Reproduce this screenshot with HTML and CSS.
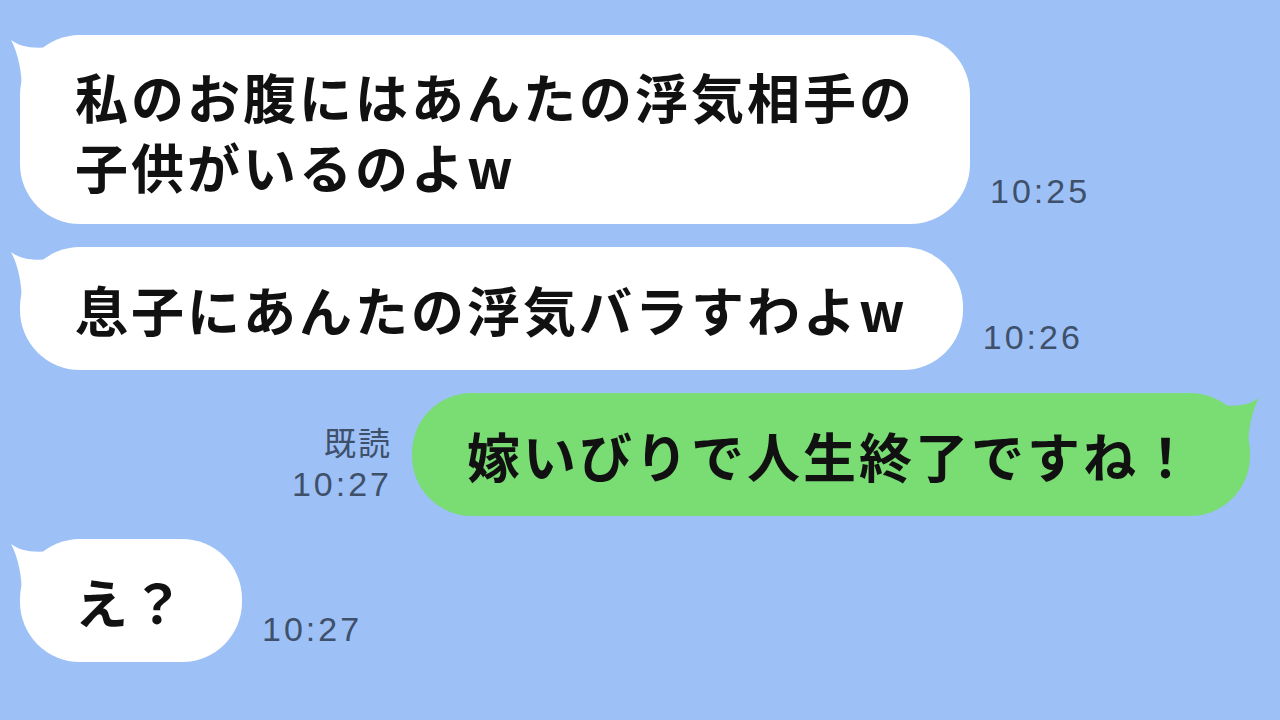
FILE: index.html
```html
<!DOCTYPE html>
<html lang="ja">
<head>
<meta charset="utf-8">
<link rel="stylesheet" href="styles.css">
</head>
<body>
<main class="chat">
  <div class="row row-left">
    <div class="bubble bubble-white bubble-multi">
      <svg class="tail tail-left" viewBox="0 0 60 60" aria-hidden="true"><path d="M3 5 C 14 13, 28 15, 58 10 L 58 58 L 14 58 C 14 36, 10 18, 3 5 Z"/></svg>
      <p class="text">私のお腹にはあんたの浮気相手の<br>子供がいるのよw</p>
    </div>
    <div class="meta"><span class="time">10:25</span></div>
  </div>

  <div class="row row-left">
    <div class="bubble bubble-white">
      <svg class="tail tail-left" viewBox="0 0 60 60" aria-hidden="true"><path d="M3 5 C 14 13, 28 15, 58 10 L 58 58 L 14 58 C 14 36, 10 18, 3 5 Z"/></svg>
      <p class="text">息子にあんたの浮気バラすわよw</p>
    </div>
    <div class="meta"><span class="time">10:26</span></div>
  </div>

  <div class="row row-right">
    <div class="meta meta-right"><span class="read">既読</span><span class="time">10:27</span></div>
    <div class="bubble bubble-green">
      <svg class="tail tail-right" viewBox="0 0 60 60" aria-hidden="true"><path d="M57 5 C 46 13, 32 15, 2 10 L 2 58 L 46 58 C 46 36, 50 18, 57 5 Z"/></svg>
      <p class="text">嫁いびりで人生終了ですね！</p>
    </div>
  </div>

  <div class="row row-left">
    <div class="bubble bubble-white">
      <svg class="tail tail-left" viewBox="0 0 60 60" aria-hidden="true"><path d="M3 5 C 14 13, 28 15, 58 10 L 58 58 L 14 58 C 14 36, 10 18, 3 5 Z"/></svg>
      <p class="text">え？</p>
    </div>
    <div class="meta"><span class="time">10:27</span></div>
  </div>
</main>
</body>
</html>
```

FILE: styles.css
```css
html, body {
  margin: 0;
  padding: 0;
}

body {
  width: 1280px;
  height: 720px;
  overflow: hidden;
  background: #9dc0f6;
  font-family: "Noto Sans CJK JP", "Noto Sans", sans-serif;
}

.chat {
  display: flex;
  flex-direction: column;
  gap: 23px;
  padding: 35px 30px 0 20px;
}

.row {
  display: flex;
  align-items: flex-end;
  gap: 20px;
}

.row-right {
  justify-content: flex-end;
}

.bubble {
  position: relative;
  border-radius: 60px;
  padding: 27px 55px 26px;
}

.bubble-multi {
  padding: 26px 55px 23px;
}

.bubble-white {
  background: #ffffff;
}

.bubble-white .tail path {
  fill: #ffffff;
}

.bubble-green {
  background: #79dd74;
}

.bubble-green .tail path {
  fill: #79dd74;
}

.tail {
  position: absolute;
  top: 0;
  width: 60px;
  height: 60px;
  overflow: visible;
}

.tail-left {
  left: -12px;
}

.tail-right {
  right: -12px;
}

.text {
  position: relative;
  margin: 0;
  font-size: 53px;
  font-weight: 700;
  line-height: 70px;
  letter-spacing: 3px;
  color: #111111;
  white-space: nowrap;
}

.meta {
  display: flex;
  flex-direction: column;
  padding-bottom: 13px;
  color: #3f506a;
}

.meta-right {
  align-items: flex-end;
  padding-bottom: 12px;
}

.time {
  font-family: "Liberation Sans", "Noto Sans", sans-serif;
  font-size: 34px;
  letter-spacing: 3px;
  line-height: 40px;
}

.read {
  font-family: "Noto Sans CJK JP", sans-serif;
  font-size: 32px;
  line-height: 45px;
  letter-spacing: 2px;
}
```
